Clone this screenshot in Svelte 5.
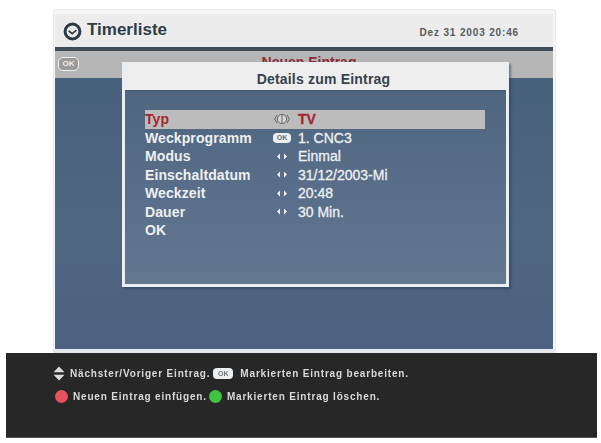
<script lang="ts">
  interface Row {
    label: string;
    value: string;
    icon: 'dial' | 'ok' | 'arrows';
    active?: boolean;
  }

  const rows: Row[] = [
    { label: 'Typ', value: 'TV', icon: 'dial', active: true },
    { label: 'Weckprogramm', value: '1. CNC3', icon: 'ok' },
    { label: 'Modus', value: 'Einmal', icon: 'arrows' },
    { label: 'Einschaltdatum', value: '31/12/2003-Mi', icon: 'arrows' },
    { label: 'Weckzeit', value: '20:48', icon: 'arrows' },
    { label: 'Dauer', value: '30 Min.', icon: 'arrows' }
  ];
</script>

<div class="page">
  <div class="screen">
    <header class="top">
      <svg class="clock" viewBox="0 0 19 19" width="19" height="19" aria-hidden="true">
        <circle cx="9.5" cy="9.5" r="7.4" fill="none" stroke="#2b3a44" stroke-width="3" />
        <path d="M5.6 8.8 L9.2 11.6 L13.4 8.2" fill="none" stroke="#2b3a44" stroke-width="1.7" />
      </svg>
      <span class="title">Timerliste</span>
      <span class="date">Dez 31 2003 20:46</span>
    </header>

    <div class="body">
      <div class="strip">
        <span class="ok-outline">OK</span>
        <span class="new">Neuen Eintrag</span>
      </div>

      <div class="dialog">
        <div class="dialog-head">Details zum Eintrag</div>
        <div class="dialog-body">
          {#each rows as row}
            <div class="row" class:active={row.active}>
              <span class="label">{row.label}</span>
              <span class="icon">
                {#if row.icon === 'dial'}
                  <svg viewBox="0 0 16 12" width="16" height="12" aria-hidden="true">
                    <circle cx="8" cy="6" r="4.6" fill="#d6d6d6" stroke="#666" />
                    <path d="M3 2 L0.6 6 L3 10 M13 2 L15.4 6 L13 10" fill="none" stroke="#666" />
                    <path d="M8 1.4 V10.6" stroke="#666" />
                  </svg>
                {:else if row.icon === 'ok'}
                  <span class="ok-solid">OK</span>
                {:else}
                  <svg viewBox="0 0 10 7" width="10" height="7" aria-hidden="true">
                    <path d="M3 0.5 V6.5 L0 3.5 Z M7 0.5 V6.5 L10 3.5 Z" fill="#f1f1f1" />
                  </svg>
                {/if}
              </span>
              <span class="value">{row.value}</span>
            </div>
          {/each}
          <div class="row"><span class="label">OK</span></div>
        </div>
      </div>
    </div>
  </div>

  <footer class="help">
    <div class="help-line">
      <svg viewBox="0 0 12 15" width="12" height="15" aria-hidden="true">
        <path d="M6 0.5 L11.5 6.3 H0.5 Z M0.5 8.7 H11.5 L6 14.5 Z" fill="#dcdcdc" />
      </svg>
      <span>Nächster/Voriger Eintrag.</span>
      <span class="ok-solid small">OK</span>
      <span>Markierten Eintrag bearbeiten.</span>
    </div>
    <div class="help-line second">
      <span class="dot red"></span>
      <span>Neuen Eintrag einfügen.</span>
      <span class="dot green"></span>
      <span>Markierten Eintrag löschen.</span>
    </div>
  </footer>
</div>

<style>
  :global(body) {
    margin: 0;
    background: #fff;
  }
  .page {
    width: 601px;
    height: 443px;
    box-sizing: border-box;
    padding-top: 9px;
    overflow: hidden;
    font-family: "Liberation Sans", Arial, sans-serif;
    filter: blur(0.6px);
  }
  .screen {
    width: 503px;
    height: 344px;
    margin-left: 53px;
    box-sizing: border-box;
    padding: 4px 2px 0 1px;
    background: #f6f7f8;
    border: 1px solid #e8e8e8;
    border-bottom: 4px solid #e4e8ee;
    border-radius: 3px 3px 0 0;
    display: flex;
    flex-direction: column;
  }
  .top {
    height: 33px;
    flex: none;
    display: flex;
    align-items: center;
    padding: 0 34px 0 8px;
    background: #ececec;
    border-bottom: 4px solid #3f4c58;
  }
  .clock {
    margin-right: 5px;
    margin-top: 2px;
  }
  .title {
    font-size: 17px;
    font-weight: 700;
    color: #2d3c48;
    margin-bottom: 1px;
  }
  .date {
    margin-left: auto;
    font-size: 10px;
    font-weight: 700;
    color: #555a5e;
    letter-spacing: 0.85px;
    margin-top: 4px;
  }
  .body {
    flex: 1;
    position: relative;
    background: linear-gradient(#47607c, #4f6680 60%, #4d6180);
  }
  .strip {
    height: 27px;
    box-sizing: border-box;
    padding-left: 10px;
    background: #b6b6b6;
    display: flex;
    justify-content: center;
    position: relative;
  }
  .ok-outline {
    position: absolute;
    left: 3px;
    top: 6px;
    width: 21px;
    height: 14px;
    box-sizing: border-box;
    border: 1px solid #eee;
    border-radius: 5px;
    background: #9c9c9c;
    color: #eee;
    font-size: 8px;
    font-weight: 700;
    line-height: 12px;
    text-align: center;
  }
  .new {
    font-size: 14px;
    font-weight: 700;
    color: #8d2b35;
    line-height: 14px;
    margin-top: 4px;
  }
  .dialog {
    position: absolute;
    left: 67px;
    top: 11px;
    width: 387px;
    height: 225px;
    box-sizing: border-box;
    background: #eeeeee;
    border: 3px solid #e9eef2;
    border-top-width: 1px;
    display: flex;
    flex-direction: column;
    box-shadow: 2px 2px 2px rgba(40, 55, 75, 0.5);
  }
  .dialog-head {
    height: 28px;
    flex: none;
    box-sizing: border-box;
    padding-left: 16px;
    text-align: center;
    font-size: 14px;
    font-weight: 700;
    letter-spacing: 0.2px;
    line-height: 32px;
    color: #36424c;
    background: #eeeeee;
    border-bottom: 1px solid #46586c;
  }
  .dialog-body {
    flex: 1;
    box-sizing: border-box;
    padding: 19px 21px 0 20px;
    background: linear-gradient(#4f667f, #5a6f8b 60%, #64778f);
  }
  .row {
    height: 18.5px;
    display: flex;
    align-items: center;
    font-size: 14px;
    font-weight: 700;
    color: #eef0f2;
    letter-spacing: 0.1px;
    white-space: nowrap;
  }
  .row.active {
    background: #bcbcbc;
    color: #a8252e;
  }
  .label {
    width: 124px;
    flex: none;
  }
  .icon {
    width: 26px;
    flex: none;
    display: flex;
    justify-content: center;
  }
  .value {
    margin-left: 3px;
    letter-spacing: 0;
    font-weight: 400;
    -webkit-text-stroke: 0.3px currentColor;
  }
  .active .value {
    font-weight: 700;
  }
  .ok-solid {
    display: inline-block;
    width: 18px;
    height: 10px;
    border-radius: 4px;
    background: #eceff2;
    color: #5a6f85;
    font-size: 7px;
    font-weight: 700;
    line-height: 10px;
    letter-spacing: 0;
    text-align: center;
  }
  .ok-solid.small {
    width: 20px;
    height: 11px;
    line-height: 11px;
    color: #777;
    margin: 0 2px 0 -2px;
  }
  .help {
    width: 591px;
    height: 85px;
    margin: 0 0 0 6px;
    box-sizing: border-box;
    padding: 9px 0 0 47px;
    background: #272727;
    border-bottom: 1px solid #555;
  }
  .help-line {
    height: 23px;
    display: flex;
    align-items: center;
    gap: 5px;
    font-size: 10px;
    font-weight: 700;
    letter-spacing: 0.82px;
    color: #d9d9d9;
    white-space: nowrap;
  }
  .second {
    padding-left: 2px;
  }
  .dot {
    width: 13px;
    height: 13px;
    border-radius: 50%;
    flex: none;
  }
  .dot.red {
    background: #e8525f;
  }
  .dot.green {
    background: #3fc53f;
    margin-left: -3px;
  }
</style>
